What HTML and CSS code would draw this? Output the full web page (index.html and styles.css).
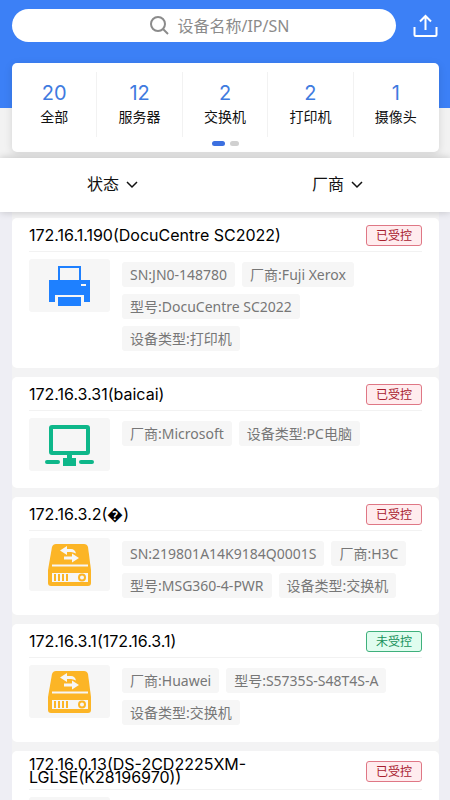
FILE: index.html
```html
<!DOCTYPE html>
<html lang="zh-CN">
<head>
<meta charset="utf-8">
<meta name="viewport" content="width=device-width, initial-scale=1">
<title>设备</title>
<link rel="stylesheet" href="styles.css">
</head>
<body>
<svg class="sprite" aria-hidden="true">
  <symbol id="icon-switch" viewBox="0 0 44 42">
    <path fill="#fcb526" d="M8 0h28q3 0 4 3l3 23v13q0 3-3 3H3q-3 0-3-3V26L4 3q1-3 4-3z"/>
    <path fill="#f6f6f6" d="M4 20.500h36v2H4zM4 29h36v9H4z"/>
    <path fill="#fcb526" d="M6 30h2v7H6zM10 30h2v7h-2zM14 30h2v7h-2zM18 30h2v7h-2z"/>
    <circle cx="34" cy="33.500" r="3" fill="none" stroke="#fcb526" stroke-width="2"/>
    <path fill="#f6f6f6" d="M12 6.500L19 2v3h4q4 0 5 4.500Q25 8 23 8h-4v3zM31 14l-7-4.500v3h-8v3h8v3z"/>
  </symbol>
</svg>
<div class="app">
  <header class="top">
    <div class="search-row">
      <label class="search">
        <svg class="search-icon" viewBox="0 0 20 20" fill="none" stroke="#8b8b8b" stroke-width="2"><circle cx="9" cy="8" r="7"/><path d="M14 13l5 5"/></svg>
        <input type="search" placeholder="设备名称/IP/SN" aria-label="设备名称/IP/SN">
      </label>
      <button class="share" type="button" aria-label="导出">
        <svg viewBox="0 0 26 24" fill="none" stroke="#fff" stroke-width="2"><path d="M2 13v8q0 1 1 1h20q1 0 1-1v-8M13 16V2M7.500 7.500L13 2l5.500 5.500"/></svg>
      </button>
    </div>
    <nav class="stats">
      <div class="stat-list">
        <a class="stat" href="#"><b>20</b><span>全部</span></a>
        <a class="stat" href="#"><b>12</b><span>服务器</span></a>
        <a class="stat" href="#"><b>2</b><span>交换机</span></a>
        <a class="stat" href="#"><b>2</b><span>打印机</span></a>
        <a class="stat" href="#"><b>1</b><span>摄像头</span></a>
      </div>
      <div class="dots"><i class="dot dot-on"></i><i class="dot"></i></div>
    </nav>
  </header>
  <div class="filters">
    <div class="filter"><div class="pick">
      <select aria-label="状态"><option>状态</option></select>
      <svg class="chevron" viewBox="0 0 12 8" fill="none" stroke="#111" stroke-width="1.5"><path d="M1 1l5 5 5-5"/></svg>
    </div></div>
    <div class="filter"><div class="pick">
      <select aria-label="厂商"><option>厂商</option></select>
      <svg class="chevron" viewBox="0 0 12 8" fill="none" stroke="#111" stroke-width="1.5"><path d="M1 1l5 5 5-5"/></svg>
    </div></div>
  </div>
  <main class="list">
    <div class="cards">
      <article class="card">
        <div class="card-head"><h2>172.16.1.190(DocuCentre SC2022)</h2><span class="badge">已受控</span></div>
        <div class="card-body">
          <div class="thumb"><svg class="icon" viewBox="0 0 44 42"><path fill="none" stroke="#1e80ff" stroke-width="2" d="M11 16V2h21v14"/><path fill="#1e80ff" d="M1 15h41v22h-6v-7H7v7H1z"/><path fill="#1e80ff" d="M10 32h23v9H10z"/><path fill="#f6f6f6" d="M33 19h5v2h-5z"/></svg></div>
          <div class="tags"><span class="tag">SN:JN0-148780</span><span class="tag">厂商:Fuji Xerox</span><span class="tag">型号:DocuCentre SC2022</span><span class="tag">设备类型:打印机</span></div>
        </div>
      </article>
      <article class="card">
        <div class="card-head"><h2>172.16.3.31(baicai)</h2><span class="badge">已受控</span></div>
        <div class="card-body">
          <div class="thumb"><svg class="icon icon-wide" viewBox="0 0 52 42"><rect x="7" y="3" width="37" height="26" rx="1" fill="none" stroke="#0eb78a" stroke-width="4"/><path fill="#0eb78a" d="M23 30h5v4h4v8H19v-8h4z"/><path stroke="#0eb78a" stroke-width="4" stroke-linecap="round" d="M3 38h11M37 38h11"/></svg></div>
          <div class="tags"><span class="tag">厂商:Microsoft</span><span class="tag">设备类型:PC电脑</span></div>
        </div>
      </article>
      <article class="card">
        <div class="card-head"><h2>172.16.3.2(�)</h2><span class="badge">已受控</span></div>
        <div class="card-body">
          <div class="thumb"><svg class="icon"><use href="#icon-switch"/></svg></div>
          <div class="tags"><span class="tag">SN:219801A14K9184Q0001S</span><span class="tag">厂商:H3C</span><span class="tag">型号:MSG360-4-PWR</span><span class="tag">设备类型:交换机</span></div>
        </div>
      </article>
      <article class="card">
        <div class="card-head"><h2>172.16.3.1(172.16.3.1)</h2><span class="badge badge-free">未受控</span></div>
        <div class="card-body">
          <div class="thumb"><svg class="icon"><use href="#icon-switch"/></svg></div>
          <div class="tags"><span class="tag">厂商:Huawei</span><span class="tag">型号:S5735S-S48T4S-A</span><span class="tag">设备类型:交换机</span></div>
        </div>
      </article>
      <article class="card">
        <div class="card-head"><h2>172.16.0.13(DS-2CD2225XM-LGLSE(K28196970))</h2><span class="badge">已受控</span></div>
        <div class="card-body">
          <div class="thumb"></div>
          <div class="tags"></div>
        </div>
      </article>
    </div>
  </main>
</div>
</body>
</html>
```
FILE: styles.css
```css
* { box-sizing: border-box; }
body {
  margin: 0;
  font-family: "Noto Sans", "Noto Sans CJK SC", sans-serif;
  font-size: 14px;
  color: #111;
  background: #eeeef4;
}
.sprite { position: absolute; width: 0; height: 0; }
.app { display: flex; flex-direction: column; height: 100vh; }

.top {
  padding: 9px 11px 6px 12px;
  background: linear-gradient(#3c80f6 108px, #f2f2f2 108px);
}
.search-row { display: flex; align-items: center; gap: 16px; }
.search {
  flex: 1;
  display: grid;
  grid-template-columns: 41% 1fr;
  align-items: center;
  gap: 8px;
  height: 33px;
  border-radius: 17px;
  background: #fff;
}
.search-icon { width: 20px; height: 20px; justify-self: end; }
.search input {
  width: 100%;
  min-width: 0;
  padding: 0;
  border: 0;
  outline: 0;
  background: none;
  font: inherit;
  font-size: 16px;
}
.search input::placeholder { color: #8b8b8b; opacity: 1; }
.share { width: 27px; height: 24px; padding: 0; border: 0; background: none; }
.share svg { display: block; width: 100%; height: 100%; }

.stats {
  margin-top: 21px;
  padding: 9px 0 6px;
  border-radius: 5px;
  background: #fff;
  box-shadow: 0 2px 8px rgba(0, 0, 0, 0.12);
}
.stat-list { display: grid; grid-template-columns: repeat(5, 1fr); }
.stat {
  display: flex;
  flex-direction: column;
  align-items: center;
  height: 65px;
  padding-top: 9px;
  color: #111;
  text-decoration: none;
  border-right: 1px solid #f2f2f2;
}
.stat:last-child { border-right-color: transparent; }
.stat b { font-family: Inter, sans-serif; font-size: 20px; line-height: 24px; font-weight: 400; color: #3f7be0; }
.stat span { line-height: 24px; }
.dots { display: flex; justify-content: center; gap: 5px; padding-top: 4px; }
.dot { width: 9px; height: 5px; border-radius: 3px; background: #d0d0d0; }
.dot-on { width: 13px; background: #3c70e0; }

.filters {
  position: relative;
  display: grid;
  grid-template-columns: 1fr 1fr;
  padding-bottom: 2px;
  height: 54px;
  background: #fff;
  box-shadow: 0 0 8px rgba(0, 0, 0, 0.2);
}
.filter { display: flex; align-items: center; justify-content: center; }
.pick { position: relative; }
.pick select {
  display: block;
  padding: 0 18px 0 0;
  border: 0;
  appearance: none;
  background: none;
  font: inherit;
  font-size: 16px;
  color: #111;
}
.chevron { position: absolute; right: 0; top: 50%; width: 12px; height: 8px; margin-top: -3px; pointer-events: none; }

.list { flex: 1; min-height: 0; padding: 0 11px 0 12px; overflow-y: auto; scrollbar-width: none; }
.cards { display: flex; flex-direction: column; gap: 9px; padding-top: 6px; background: #f3f3f4; }
.card { padding: 0 17px 17px; border-radius: 5px; background: #fff; }
.card-head {
  display: flex;
  align-items: center;
  gap: 12px;
  padding: 7px 0 5px;
  border-bottom: 1px solid #f2f2f2;
}
.card h2 { flex: 1; margin: 0; font-family: Inter, "Noto Sans CJK SC", sans-serif; font-size: 16px; line-height: 13px; font-weight: 400; color: #000; }
.badge {
  height: 21px;
  padding: 0 9px;
  border: 1px solid #df7785;
  border-radius: 3px;
  background: #ffecee;
  font-size: 12px;
  line-height: 19px;
  color: #a8202f;
}
.badge-free { border-color: #3fb07c; background: #e0fdef; color: #16915a; }
.card-body { display: flex; gap: 12px; padding-top: 7px; }
.thumb {
  flex: none;
  display: flex;
  align-items: center;
  justify-content: center;
  width: 81px;
  height: 53px;
  border-radius: 3px;
  background: #f6f6f6;
}
.icon { width: 44px; height: 42px; }
.icon-wide { width: 52px; }
.tags { flex: 1; display: flex; flex-wrap: wrap; align-content: flex-start; gap: 7px; padding-top: 3px; }
.tag { height: 25px; padding: 0 8px; border-radius: 3px; background: #f6f6f6; line-height: 25px; color: #777; }
```
